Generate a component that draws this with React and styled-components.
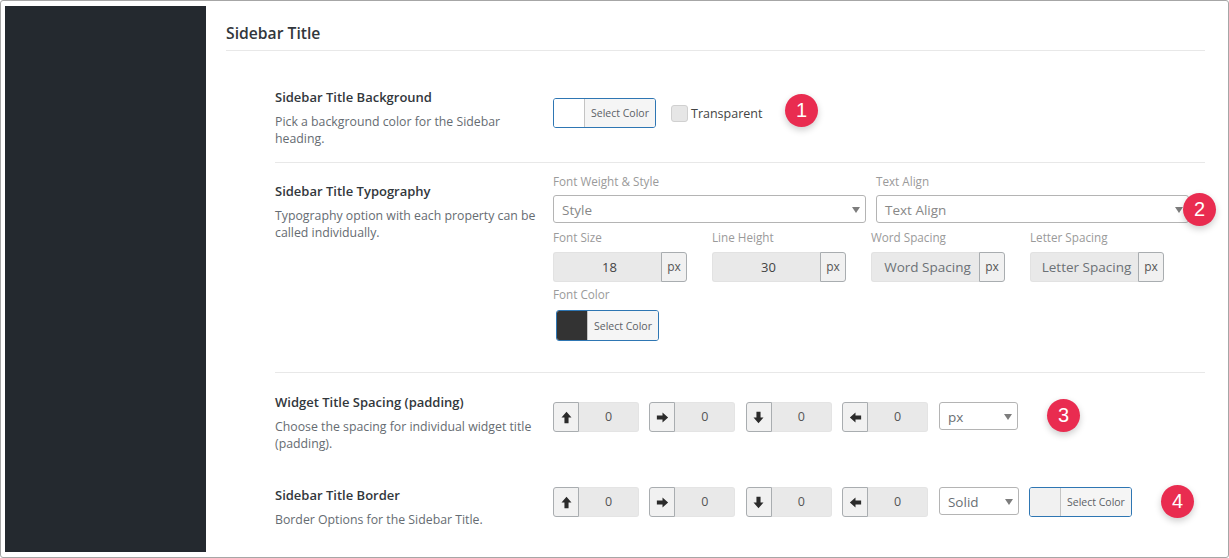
import React from 'react';
import styled, { createGlobalStyle } from 'styled-components';

const Global = createGlobalStyle`
  html, body { margin: 0; padding: 0; background: #fff; }
  body { font-family: "Open Sans", "Noto Sans", "Liberation Sans", sans-serif; }
  * { box-sizing: border-box; }
`;
const Frame = styled.div`
  position: relative; width: 1229px; height: 558px; background: #fff;
  border: 1px solid #a6a6a6; border-radius: 3px; display: flex; padding: 5px 23px 5px 4px; overflow: hidden;
`;
const Sidebar = styled.aside`width: 201px; flex: none; background: #24292f;`;
const Main = styled.main`flex: 1; padding-left: 20px; display: flex; flex-direction: column;`;
const Heading = styled.h2`
  margin: 0; height: 45px; padding-top: 15px; font-size: 15.7px; line-height: 24px; font-weight: 600; color: #32373c;
  border-bottom: 1px solid #e8e8e8; flex: none;
`;
const Body = styled.div`padding-left: 49px;`;
const Row = styled.section`
  display: grid; grid-template-columns: 278px 1fr; height: ${p => p.$h}px; padding-top: ${p => p.$pt}px;
  border-bottom: ${p => p.$line ? '1px solid #e8e8e8' : 'none'};
`;
const Info = styled.div`padding-top: ${p => p.$pt || 0}px;`;
const RowTitle = styled.h3`margin: 0 0 7px; font-size: 13px; line-height: 18px; font-weight: 600; color: #32373c;`;
const Desc = styled.p`margin: 0; font-size: 12.3px; line-height: 17px; color: #666c72; width: 264px;`;
const Controls = styled.div`display: flex; align-items: flex-start; padding-top: 10px;`;
const Stack = styled.div`display: flex; flex-direction: column;`;
const FieldLabel = styled.div`font-size: 11.7px; line-height: 16px; color: #9a9a9a; margin-bottom: ${p => p.$mb || 6}px;`;
const Picker = styled.div`
  display: flex; width: 103px; height: ${p => p.$h || 30}px; border: 1px solid #2e76b3; border-radius: 3px;
  overflow: hidden; margin: ${p => p.$m || 0}; flex: none;
`;
const Swatch = styled.span`width: 31px; flex: none; background: ${p => p.$c}; border-right: 1px solid #c4c4c4;`;
const PickerText = styled.span`
  flex: 1; background: #f5f5f5; color: #5c6166; font-size: 10.5px; display: flex; align-items: center; justify-content: center; white-space: nowrap;
`;
const Check = styled.span`width: 17px; height: 17px; background: #e6e6e6; border: 1px solid #d0d0d0; border-radius: 3px; margin: 7px 3px 0 15px;`;
const CheckLabel = styled.span`font-size: 12.5px; line-height: 32px; color: #444;`;
const Select = styled.div`
  position: relative; width: ${p => p.$w}px; height: 28px; border: 1px solid #b4b4b4; border-radius: 3px; background: #fff;
  color: ${p => p.$dark ? '#6a6f74' : '#888'}; font-size: 13.5px; line-height: 29px; padding-left: 8px; flex: none;
  margin-left: ${p => p.$ml || 0}px;
  &::after { content: ''; position: absolute; right: 5px; top: 11px; border: 4.5px solid transparent; border-top: 6px solid #7d7d7d; border-bottom: 0; }
`;
const SelectGrid = styled.div`display: grid; grid-template-columns: 313px 313px; column-gap: 10px;`;
const FieldRow = styled.div`display: grid; grid-template-columns: repeat(4, 134px); column-gap: 25px; margin-top: 6px;`;
const InputGroup = styled.div`display: flex; width: 134px; height: 30px;`;
const Value = styled.div`
  flex: 1; background: #e9e9e9; border: 1px solid #e2e2e2; border-right: 0; border-radius: 3px 0 0 3px; padding-left: 4px;
  color: ${p => p.$ph ? '#6c7176' : '#444'}; font-size: ${p => p.$ph ? 13.5 : 13}px; display: flex; align-items: center; justify-content: center; white-space: nowrap;
`;
const Addon = styled.div`
  width: 26px; flex: none; background: #f1f1f1; border: 1px solid #a9adb0; border-radius: 0 3px 3px 0;
  color: #555; font-size: 12px; display: flex; align-items: center; justify-content: center; padding-bottom: 1px;
`;
const FontColor = styled.div`display: flex; flex-direction: column; margin-top: 4px;`;
const SpacingRow = styled.div`display: flex; align-items: flex-start; padding-top: ${p => p.$pt}px;`;
const Spacing = styled.div`display: flex; width: 86px; height: 30px; margin-right: 10.4px; flex: none;`;
const ArrowBox = styled.div`
  width: 26px; flex: none; background: #f1f1f1; border: 1px solid #a9adb0; border-radius: 3px 0 0 3px;
  display: flex; align-items: center; justify-content: center;
`;
const SpacingValue = styled.div`
  flex: 1; background: #e9e9e9; border: 1px solid #e4e4e4; border-left: 0; border-radius: 0 3px 3px 0; color: #555;
  font-size: 12.5px; display: flex; align-items: center; justify-content: center; padding-bottom: 2px;
`;
const Badge = styled.div`
  position: absolute; left: ${p => p.$x - 17}px; top: ${p => p.$y - 17}px; width: 33px; height: 33px; border-radius: 50%;
  background: #e92c50; color: #fff; font-family: "Liberation Sans", sans-serif; font-size: 20px; display: flex; align-items: center; justify-content: center;
  box-shadow: 0 3px 7px rgba(0,0,0,.2);
`;

const rotations = { up: 0, right: 90, down: 180, left: 270 };
const ArrowSvg = styled.svg`transform: rotate(${p => rotations[p.$dir]}deg);`;
const Arrow = ({ dir }) => (
  <ArrowSvg $dir={dir} width="13" height="13" viewBox="0 0 12 12">
    <path d="M6 .8 10.6 6H7.9v5.2H4.1V6H1.4z" fill="#2b2b2b" />
  </ArrowSvg>
);
const SpacingField = ({ dir }) => (
  <Spacing><ArrowBox><Arrow dir={dir} /></ArrowBox><SpacingValue>0</SpacingValue></Spacing>
);
const Dirs = () => ['up', 'right', 'down', 'left'].map(d => <SpacingField key={d} dir={d} />);
const Field = ({ label, value, ph }) => (
  <Stack>
    <FieldLabel $mb={7}>{label}</FieldLabel>
    <InputGroup><Value $ph={ph}>{value}</Value><Addon>px</Addon></InputGroup>
  </Stack>
);

export default function App() {
  return (
    <>
      <Global />
      <Frame>
        <Sidebar />
        <Main>
          <Heading>Sidebar Title</Heading>
          <Body>
            <Row $h={112} $line $pt={37}>
              <Info>
                <RowTitle>Sidebar Title Background</RowTitle>
                <Desc>Pick a background color for the Sidebar heading.</Desc>
              </Info>
              <Controls>
                <Picker><Swatch $c="#fff" /><PickerText>Select Color</PickerText></Picker>
                <Check />
                <CheckLabel>Transparent</CheckLabel>
              </Controls>
            </Row>
            <Row $h={210} $line $pt={10}>
              <Info $pt={9}>
                <RowTitle>Sidebar Title Typography</RowTitle>
                <Desc>Typography option with each property can be called individually.</Desc>
              </Info>
              <Stack>
                <SelectGrid>
                  <Stack><FieldLabel>Font Weight &amp; Style</FieldLabel><Select $w={313}>Style</Select></Stack>
                  <Stack><FieldLabel>Text Align</FieldLabel><Select $w={313}>Text Align</Select></Stack>
                </SelectGrid>
                <FieldRow>
                  <Field label="Font Size" value="18" />
                  <Field label="Line Height" value="30" />
                  <Field label="Word Spacing" value="Word Spacing" ph />
                  <Field label="Letter Spacing" value="Letter Spacing" ph />
                </FieldRow>
                <FontColor>
                  <FieldLabel $mb={8}>Font Color</FieldLabel>
                  <Picker $h={31} $m="0 0 0 3px"><Swatch $c="#333" /><PickerText>Select Color</PickerText></Picker>
                </FontColor>
              </Stack>
            </Row>
            <Row $h={92} $pt={20}>
              <Info>
                <RowTitle>Widget Title Spacing (padding)</RowTitle>
                <Desc>Choose the spacing for individual widget title (padding).</Desc>
              </Info>
              <SpacingRow $pt={9}>
                <Dirs />
                <Select $w={79} $dark $ml={0.4}>px</Select>
              </SpacingRow>
            </Row>
            <Row $h={80} $pt={21}>
              <Info>
                <RowTitle>Sidebar Title Border</RowTitle>
                <Desc>Border Options for the Sidebar Title.</Desc>
              </Info>
              <SpacingRow $pt={1}>
                <Dirs />
                <Select $w={80} $dark $ml={0.4}>Solid</Select>
                <Picker $m="0 0 0 10px"><Swatch $c="#f1f1f1" /><PickerText>Select Color</PickerText></Picker>
              </SpacingRow>
            </Row>
          </Body>
        </Main>
        <Badge $x={801} $y={110}>1</Badge>
        <Badge $x={1199} $y={209}>2</Badge>
        <Badge $x={1063} $y={415}>3</Badge>
        <Badge $x={1177} $y={501}>4</Badge>
      </Frame>
    </>
  );
}
